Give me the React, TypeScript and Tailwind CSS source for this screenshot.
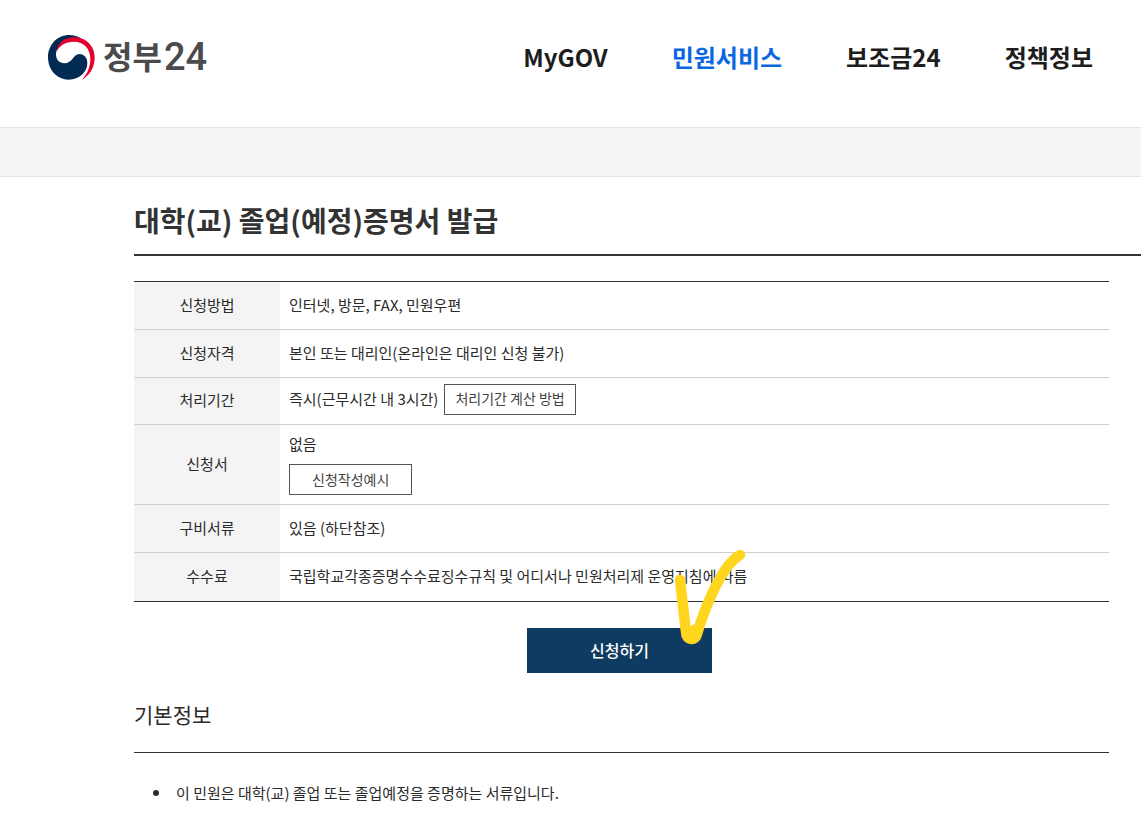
import type { ReactNode } from "react";

const navItems = [
  { label: "MyGOV", active: false },
  { label: "민원서비스", active: true },
  { label: "보조금24", active: false },
  { label: "정책정보", active: false },
];

function Emblem() {
  return (
    <svg viewBox="0 0 141 135" className="h-[45px] w-[47px]" aria-hidden="true">
      <path
        fill="#002b52"
        d="M64 0C27 0 0 30 0 67c0 38 27 67 62 67 32 0 56-22 56-50 0-16-10-27-24-27-19 0-20 28-45 28-15 0-25-11-25-27C24 34 48 15 100 11 90 4 77 0 64 0Z"
      />
      <path
        fill="#e5002e"
        d="M25 50C29 22 51 7 78 7c36 0 62 26 62 60 0 30-15 55-38 67 16-17 25-38 25-62 0-31-19-52-50-52-24 0-41 10-52 30Z"
      />
    </svg>
  );
}

function CheckStroke() {
  return (
    <svg viewBox="0 0 76 100" className="pointer-events-none absolute -top-20 -right-9 h-[100px] w-[76px]" aria-hidden="true">
      <path
        d="M8 32C10 50 12 67 14 84C14 93 24 93 25 86C31 66 48 18 68 7"
        fill="none"
        stroke="#ffd51e"
        strokeWidth="10.5"
        strokeLinecap="round"
        strokeLinejoin="round"
      />
      <path d="M14 82L19 88L25 84L22 76Z" fill="#ffd51e" />
    </svg>
  );
}

function SmallButton({ children, className }: { children: ReactNode; className: string }) {
  return (
    <button type="button" className={`h-[31px] border border-[#555] bg-white pb-0.5 text-sm leading-5 text-[#444] ${className}`}>
      {children}
    </button>
  );
}

function Row({ title, children, height }: { title: string; children: ReactNode; height: string }) {
  return (
    <tr className={`border-b border-[#cfcfcf] last:border-[#333] ${height}`}>
      <th scope="row" className="w-[146px] bg-[#f4f4f4] pb-0.5 text-center font-normal">
        {title}
      </th>
      <td className="pb-0.5 pl-[9px]">{children}</td>
    </tr>
  );
}

export default function App() {
  return (
    <div className="min-h-screen bg-white font-['Noto_Sans_CJK_KR',sans-serif] text-[15px] leading-6 text-[#2b2b2b]">
      <header className="flex h-[127px] items-start justify-between px-12 pt-[34px]">
        <a href="#" className="flex items-center gap-2 text-[#4b4b4d]" aria-label="정부24">
          <Emblem />
          <span className="flex items-center gap-0.5">
            <span className="pb-1 text-[32px] leading-[42px] font-bold">정부</span>
            <span className="font-[Roboto,sans-serif] text-[38px] leading-[46px] font-medium">24</span>
          </span>
        </a>
        <nav className="flex gap-16 text-2xl leading-[46px] font-bold">
          {navItems.map((item) => (
            <a key={item.label} href="#" className={item.active ? "text-[#0b66e4]" : "text-[#1d1d1d]"}>
              {item.label}
            </a>
          ))}
        </nav>
      </header>

      <div className="h-[50px] border-y border-[#e3e3e3] bg-[#f6f4f5]" />

      <main className="pl-[134px]">
        <h1 className="border-b-2 border-[#333] pt-[23px] pb-[14px] text-[28px] leading-10 font-bold text-[#333]">
          대학(교) 졸업(예정)증명서 발급
        </h1>

        <div className="pt-[25px] pr-8">
          <table className="w-full border-collapse border-t border-[#333]">
            <tbody>
              <Row title="신청방법" height="h-12">인터넷, 방문, FAX, 민원우편</Row>
              <Row title="신청자격" height="h-12">본인 또는 대리인(온라인은 대리인 신청 불가)</Row>
              <Row title="처리기간" height="h-[47px]">
                <div className="flex items-center gap-1.5 pb-0.5">
                  <span>즉시(근무시간 내 3시간)</span>
                  <SmallButton className="px-2.5">처리기간 계산 방법</SmallButton>
                </div>
              </Row>
              <Row title="신청서" height="h-20">
                <div className="flex flex-col items-start gap-2">
                  <span>없음</span>
                  <SmallButton className="px-[22px]">신청작성예시</SmallButton>
                </div>
              </Row>
              <Row title="구비서류" height="h-12">있음 (하단참조)</Row>
              <Row title="수수료" height="h-[49px]">국립학교각종증명수수료징수규칙 및 어디서나 민원처리제 운영지침에 따름</Row>
            </tbody>
          </table>

          <div className="flex justify-center pt-[26px] pr-1">
            <div className="relative">
              <button type="button" className="h-[45px] w-[185px] bg-[#0f3a61] pb-0.5 text-base font-medium text-white">
                신청하기
              </button>
              <CheckStroke />
            </div>
          </div>

          <h2 className="border-b border-[#333] pt-[25px] pb-[22px] text-[21px] leading-8">기본정보</h2>
          <ul className="flex flex-col pt-7">
            <li className="flex items-center gap-[17px] pl-[19px]">
              <span className="size-[6px] rounded-full bg-[#2b2b2b]" />
              이 민원은 대학(교) 졸업 또는 졸업예정을 증명하는 서류입니다.
            </li>
          </ul>
        </div>
      </main>
    </div>
  );
}
